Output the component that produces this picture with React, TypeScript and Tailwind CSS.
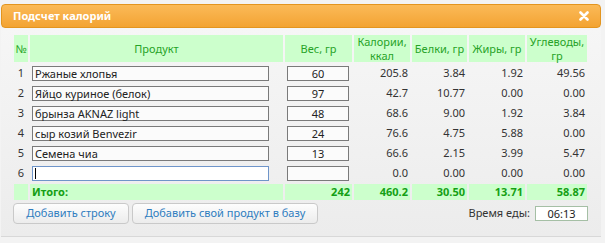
import React from 'react';

type Row = {
  name: string;
  weight: string;
  kcal: string;
  prot: string;
  fat: string;
  carb: string;
};

const ROWS: Row[] = [
  { name: 'Ржаные хлопья', weight: '60', kcal: '205.8', prot: '3.84', fat: '1.92', carb: '49.56' },
  { name: 'Яйцо куриное (белок)', weight: '97', kcal: '42.7', prot: '10.77', fat: '0.00', carb: '0.00' },
  { name: 'брынза AKNAZ light', weight: '48', kcal: '68.6', prot: '9.00', fat: '1.92', carb: '3.84' },
  { name: 'сыр козий Benvezir', weight: '24', kcal: '76.6', prot: '4.75', fat: '5.88', carb: '0.00' },
  { name: 'Семена чиа', weight: '13', kcal: '66.6', prot: '2.15', fat: '3.99', carb: '5.47' },
  { name: '', weight: '', kcal: '0.0', prot: '0.00', fat: '0.00', carb: '0.00' },
];

const head = 'bg-[#ccffcc] text-[#27a327] flex flex-col items-center justify-center text-center leading-[14px]';
const total = 'bg-[#ccffcc] text-[#14a014] font-bold flex items-center justify-end pr-[2px]';
const num = 'flex items-center justify-end pr-[2px] text-[#333]';

export default function App() {
  return (
    <div
      className="w-[605px] h-[243px] bg-[#f3f3f3] pt-[4px] pl-[1px] text-[11px] text-[#333]"
      style={{ fontFamily: '"Noto Sans", "Open Sans", sans-serif' }}
    >
      {/* Заголовок */}
      <div className="w-[600px] h-[24px] rounded-[4px] border border-[#e3951f] bg-gradient-to-b from-[#fbba57] to-[#f3a331] flex items-center justify-between pl-[11px] pr-[11px]">
        <span className="text-white font-bold text-[11px]">Подсчет калорий</span>
        <svg width="10" height="10" viewBox="0 0 10 10">
          <path d="M1.5 1.5 L8.5 8.5 M8.5 1.5 L1.5 8.5" stroke="#fff" strokeWidth="2.6" strokeLinecap="round" />
        </svg>
      </div>

      {/* Тело */}
      <div className="w-[600px] h-[209px] bg-gradient-to-b from-[#f6f6f6] to-[#ececec] border-b border-[#d8d8d8] pt-[7px] pl-[13px]">
        <div className="grid grid-cols-[14px_253px_67px_56px_55px_56px_60px] gap-x-[2px] gap-y-[2px] grid-rows-[27px_repeat(6,18px)_16px]">
          <div className={head}>№</div>
          <div className={head}>Продукт</div>
          <div className={head}>Вес, гр</div>
          <div className={head}>
            <span>Калории,</span>
            <span>ккал</span>
          </div>
          <div className={head}>Белки, гр</div>
          <div className={head}>Жиры, гр</div>
          <div className={head}>
            <span>Углеводы,</span>
            <span>гр</span>
          </div>

          {ROWS.map((r, i) => (
            <React.Fragment key={i}>
              <div className="flex items-center justify-center text-[#333]">{i + 1}</div>
              <div className="flex items-center pl-[2px]">
                <div
                  className={
                    i === 5
                      ? 'w-[237px] h-[15px] border border-[#6f95c9] bg-white flex items-center pl-[2px] leading-none'
                      : 'w-[237px] h-[15px] border border-[#7a7a7a] bg-[#fbfbfb] flex items-center pl-[2px] leading-none text-[#222]'
                  }
                >
                  {i === 5 ? <span className="w-[1px] h-[11px] bg-black" /> : r.name}
                </div>
              </div>
              <div className="flex items-center pl-[2px]">
                <div className="w-[62px] h-[15px] border border-[#7a7a7a] bg-[#fbfbfb] flex items-center justify-center leading-none text-[#222]">
                  {r.weight}
                </div>
              </div>
              <div className={num}>{r.kcal}</div>
              <div className={num}>{r.prot}</div>
              <div className={num}>{r.fat}</div>
              <div className={num}>{r.carb}</div>
            </React.Fragment>
          ))}

          <div className="bg-[#ccffcc]" />
          <div className="bg-[#ccffcc] text-[#14a014] font-bold flex items-center pl-[2px]">Итого:</div>
          <div className={total}>242</div>
          <div className={total}>460.2</div>
          <div className={total}>30.50</div>
          <div className={total}>13.71</div>
          <div className={total}>58.87</div>
        </div>

        {/* Кнопки */}
        <div className="flex items-center mt-[3px] -ml-[1px] w-[575px]">
          <button className="h-[21px] w-[116px] rounded-[4px] border border-[#c9c9c9] bg-gradient-to-b from-[#fdfdfd] to-[#ececec] text-[#2f7dbf] text-[11px]">
            Добавить строку
          </button>
          <button className="h-[21px] w-[186px] ml-[3px] rounded-[4px] border border-[#c9c9c9] bg-gradient-to-b from-[#fdfdfd] to-[#ececec] text-[#2f7dbf] text-[11px]">
            Добавить свой продукт в базу
          </button>
          <div className="ml-auto flex items-center">
            <span className="text-[#333]">Время еды:</span>
            <div className="ml-[5px] w-[53px] h-[15px] border border-[#a5bfa5] bg-white flex items-center justify-center leading-none text-[#222]">
              06:13
            </div>
          </div>
        </div>
      </div>
    </div>
  );
}
